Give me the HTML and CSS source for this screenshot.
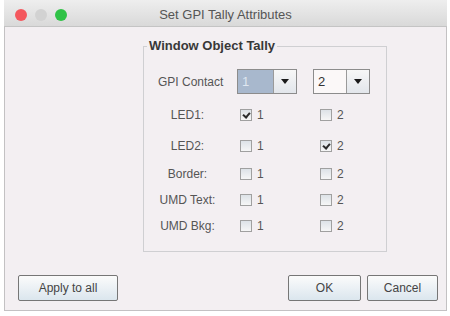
FILE: index.html
```html
<!DOCTYPE html>
<html lang="en">

<head>
    <meta charset="UTF-8">
    <meta name="viewport" content="width=device-width, initial-scale=1.0">
    <title>Set GPI Tally Attributes</title>
    <link rel="stylesheet" href="styles.css">
</head>

<body>
    <div class="window">
        <div class="titlebar">
            <div class="lights">
                <i class="light red"></i>
                <i class="light grey"></i>
                <i class="light green"></i>
            </div>
            <span class="title">Set GPI Tally Attributes</span>
        </div>
        <div class="content">
            <fieldset class="group">
                <legend>Window Object Tally</legend>
                <div class="tally">
                    <div class="row">
                        <span class="label gpi">GPI Contact</span>
                        <div class="combo selected">
                            <span class="value">1</span>
                            <span class="arrow"></span>
                        </div>
                        <div class="combo second">
                            <span class="value">2</span>
                            <span class="arrow"></span>
                        </div>
                    </div>
                    <div class="row wide">
                        <span class="label">LED1:</span>
                        <label class="opt"><i class="box checked"></i>1</label>
                        <label class="opt"><i class="box"></i>2</label>
                    </div>
                    <div class="row wide">
                        <span class="label">LED2:</span>
                        <label class="opt"><i class="box"></i>1</label>
                        <label class="opt"><i class="box checked"></i>2</label>
                    </div>
                    <div class="row">
                        <span class="label">Border:</span>
                        <label class="opt"><i class="box"></i>1</label>
                        <label class="opt"><i class="box"></i>2</label>
                    </div>
                    <div class="row tight">
                        <span class="label">UMD Text:</span>
                        <label class="opt"><i class="box"></i>1</label>
                        <label class="opt"><i class="box"></i>2</label>
                    </div>
                    <div class="row tight">
                        <span class="label">UMD Bkg:</span>
                        <label class="opt"><i class="box"></i>1</label>
                        <label class="opt"><i class="box"></i>2</label>
                    </div>
                </div>
            </fieldset>
            <div class="actions">
                <button class="apply">Apply to all</button>
                <div class="right">
                    <button class="ok">OK</button>
                    <button class="cancel">Cancel</button>
                </div>
            </div>
        </div>
    </div>
</body>

</html>
```

FILE: styles.css
```css
body {
    margin: 0;
    background: #fff;
    font-family: "Liberation Sans", Arial, sans-serif;
    font-size: 12px;
    color: #4a4a4a;
}

.window {
    margin-left: 4px;
    width: 443px;
    height: 311px;
    display: flex;
    flex-direction: column;
}

/* title bar */
.titlebar {
    height: 27px;
    flex: none;
    display: grid;
    grid-template-columns: 1fr auto 1fr;
    align-items: center;
    background: linear-gradient(#eeeeee, #d9d9d9);
    border-bottom: 1px solid #c4c4c4;
    box-sizing: border-box;
}

.lights {
    display: flex;
    gap: 8px;
    padding-left: 11px;
    padding-top: 3px;
}

.light {
    width: 12px;
    height: 12px;
    border-radius: 50%;
}

.light.red {
    background: #f4575d;
}

.light.grey {
    background: #d2d2d2;
}

.light.green {
    background: #2fc246;
}

.title {
    font-size: 13px;
    color: #555;
    padding-top: 3px;
}

/* body */
.content {
    flex: 1;
    display: flex;
    flex-direction: column;
    background: #f3eff2;
    border: 1px solid #c3c1c3;
    border-top: none;
}

.group {
    margin: 11px 0 0 138px;
    width: 244px;
    box-sizing: border-box;
    border: 1px solid #cfcfd2;
    padding: 0 0 15px 14px;
}

.group legend {
    margin-left: -11px;
    padding: 0 2px;
    font-size: 13px;
    line-height: 16px;
    font-weight: bold;
    color: #383838;
}

.tally {
    margin-top: 15px;
    display: flex;
    flex-direction: column;
    gap: 8px;
}

.row {
    display: grid;
    grid-template-columns: 79px 80px auto;
    align-items: center;
    min-height: 20px;
}

.row.wide {
    margin-top: 3px;
}

.row.tight {
    margin-top: -2px;
}

.label {
    text-align: center;
    padding-right: 20px;
    color: #555;
}

.label.gpi {
    text-align: left;
    padding-right: 0;
}

/* combo boxes */
.combo {
    height: 25px;
    width: 60px;
    box-sizing: border-box;
    display: flex;
    border: 1px solid #8c8c8c;
    background: #fbf8f8;
}

.combo.second {
    width: 57px;
    margin-left: -4px;
}

.combo .value {
    flex: 1;
    padding-left: 4px;
    line-height: 23px;
    font-size: 13px;
    color: #333;
}

.combo.selected .value {
    background: #a8b8cd;
    color: #dfe6f0;
}

.combo .arrow {
    width: 22px;
    border-left: 1px solid #9a9a9a;
    background: linear-gradient(#f7f7f7, #e2e6eb);
    display: flex;
    align-items: center;
    justify-content: center;
}

.combo .arrow::after {
    content: "";
    border-left: 4px solid transparent;
    border-right: 4px solid transparent;
    border-top: 5px solid #1a1a1a;
}

/* check boxes */
.opt {
    display: flex;
    align-items: center;
    gap: 5px;
    margin-left: 3px;
    color: #555;
}

.box {
    width: 12px;
    height: 12px;
    box-sizing: border-box;
    border: 1px solid #a0a0a0;
    background: linear-gradient(#dde2e7, #f6f6f6);
    position: relative;
}

.box.checked::after {
    content: "";
    position: absolute;
    left: 3px;
    top: 1px;
    width: 3px;
    height: 5px;
    border-right: 2px solid #2a2a2a;
    border-bottom: 2px solid #2a2a2a;
    transform: rotate(40deg);
}

/* bottom buttons */
.actions {
    margin-top: auto;
    display: flex;
    justify-content: space-between;
    padding: 0 8px 9px 13px;
}

.actions .right {
    display: flex;
    gap: 6px;
}

.actions button {
    height: 26px;
    font-family: "Liberation Sans", Arial, sans-serif;
    font-size: 12px;
    color: #444;
    border: 1px solid #767676;
    border-radius: 2px;
    background: linear-gradient(#fbfbfb, #dbe6ee);
    padding: 0;
}

.actions .apply {
    width: 100px;
}

.actions .ok {
    width: 73px;
}

.actions .cancel {
    width: 71px;
}
```
